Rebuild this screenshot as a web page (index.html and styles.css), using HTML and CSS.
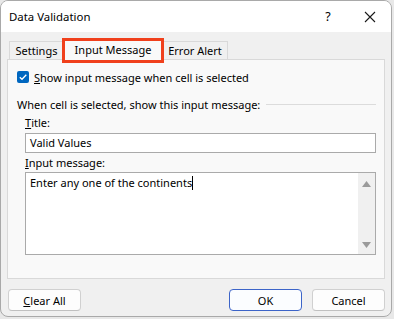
FILE: index.html
```html
<!DOCTYPE html>
<html>
<head>
<meta charset="utf-8">
<link rel="stylesheet" href="styles.css">
</head>
<body>
<div class="window">
  <div class="titlebar">
    <span class="title">Data Validation</span>
    <span class="help">?</span>
    <span class="close">
      <svg width="12" height="12" viewBox="0 0 12 12"><path d="M1 1L11 11M11 1L1 11" stroke="#1a1a1a" stroke-width="1.1" fill="none"/></svg>
    </span>
  </div>
  <div class="content">
    <div class="tabs">
      <div class="tab tab-settings">Settings</div>
      <div class="tab active">Input Message</div>
      <div class="tab tab-error">Error Alert</div>
    </div>
    <div class="panel">
      <label class="check">
        <span class="box"><svg width="10" height="10" viewBox="0 0 10 10"><path d="M1.8 5.2L4 7.3L8.3 2.8" stroke="#fff" stroke-width="1.3" fill="none"/></svg></span>
        <span><u>S</u>how input message when cell is selected</span>
      </label>
      <div class="group-head">
        <span>When cell is selected, show this input message:</span>
        <span class="rule"></span>
      </div>
      <div class="field-label"><u>T</u>itle:</div>
      <div class="input">Valid Values</div>
      <div class="field-label"><u>I</u>nput message:</div>
      <div class="textarea">
        <div class="ta-text">Enter any one of the continents<span class="caret"></span></div>
        <div class="scroll">
          <svg width="9" height="6" viewBox="0 0 9 6"><path d="M4.5 0L9 6H0Z" fill="#9a9a9a"/></svg>
          <svg width="9" height="6" viewBox="0 0 9 6"><path d="M0 0H9L4.5 6Z" fill="#9a9a9a"/></svg>
        </div>
      </div>
    </div>
    <div class="buttons">
      <button class="btn"><u>C</u>lear All</button>
      <span class="spacer"></span>
      <button class="btn default">OK</button>
      <button class="btn">Cancel</button>
    </div>
  </div>
</div>
</body>
</html>
```
FILE: styles.css
```css
* { box-sizing: border-box; }
html, body { margin: 0; padding: 0; }
body {
  background: #e8e8e8;
  font-family: "Noto Sans", "Open Sans", sans-serif;
  font-size: 11px;
  color: #000;
  width: 394px;
  height: 319px;
  overflow: hidden;
}
.window {
  width: 392px;
  height: 317px;
  border: 1px solid #a9a9a9;
  border-radius: 8px;
  background: #f0f0f0;
  overflow: hidden;
  display: flex;
  flex-direction: column;
}
.titlebar {
  height: 31px;
  background: #fff;
  display: flex;
  align-items: center;
  padding-left: 8px;
  flex-shrink: 0;
}
.title { flex: 1; font-size: 11.4px; }
.help { width: 42px; text-align: center; font-size: 12.5px; margin-left: 8px; }
.close { width: 42px; display: flex; justify-content: center; }
.content {
  flex: 1;
  padding: 6px 4px 0 6px;
  display: flex;
  flex-direction: column;
}
.tabs {
  display: flex;
  height: 21px;
  padding-left: 2px;
}
.tab {
  border: 1px solid #d9d9d9;
  border-bottom: none;
  background: #f0f0f0;
  margin-top: 3px;
  height: 18px;
  line-height: 17px;
  text-align: center;
}
.tab-settings { width: 55px; }
.tab-error { width: 66px; padding-left: 2px; padding-right: 2px; }
.tab.active {
  background: #f9f9f9;
  width: 100px;
  margin-top: 1px;
  height: 21px;
  line-height: 19px;
  border-color: #d9d9d9;
  position: relative;
  z-index: 1;
  margin-left: -1px;
  margin-right: -1px;
}
.tab.active::after {
  content: "";
  position: absolute;
  left: -2px;
  right: -2px;
  top: -2px;
  bottom: -3px;
  border: 3px solid #f0401c;
}
.panel {
  border: 1px solid #d9d9d9;
  background: #f9f9f9;
  height: 220px;
  padding: 9px 8px 0 9px;
  margin-right: 2px;
}
.check {
  display: flex;
  align-items: center;
  gap: 5px;
  height: 16px;
}
.box {
  width: 12px;
  height: 12px;
  background: #0067c0;
  border-radius: 2px;
  display: flex;
  align-items: center;
  justify-content: center;
}
.group-head {
  margin-top: 11px;
  display: flex;
  align-items: center;
  gap: 6px;
  height: 16px;
}
.rule {
  flex: 1;
  height: 1px;
  background: #dcdcdc;
}
.field-label {
  margin-left: 8px;
  margin-top: 3px;
  line-height: 16px;
}
.input {
  margin-left: 8px;
  height: 20px;
  border: 1px solid #aaaaaa;
  background: #fff;
  padding: 0 4px;
  line-height: 18px;
  margin-top: 2px;
}
.field-label + .textarea { margin-top: 1px; }
.input + .field-label { margin-top: 2px; }
.textarea {
  margin-left: 8px;
  height: 83px;
  border: 1px solid #aaaaaa;
  background: #fff;
  display: flex;
}
.ta-text {
  flex: 1;
  padding: 1px 4px;
  line-height: 17px;
}
.caret {
  display: inline-block;
  width: 1px;
  height: 14px;
  background: #000;
  vertical-align: -3px;
}
.scroll {
  width: 17px;
  background: #f0f0f0;
  display: flex;
  flex-direction: column;
  justify-content: space-between;
  align-items: center;
  padding: 8px 0 6px;
}
.buttons {
  display: flex;
  gap: 10px;
  margin-top: 10px;
  padding-left: 1px;
  padding-right: 2px;
}
.spacer { flex: 1; }
.btn {
  font-family: inherit;
  font-size: 11px;
  color: #000;
  width: 73px;
  height: 22px;
  background: #fdfdfd;
  border: 1px solid #d0d0d0;
  border-bottom-color: #c0c0c0;
  border-radius: 4px;
  padding: 0;
}
.btn.default {
  border: 1px solid #3c64c8;
  background: #fbfdff;
}
```
